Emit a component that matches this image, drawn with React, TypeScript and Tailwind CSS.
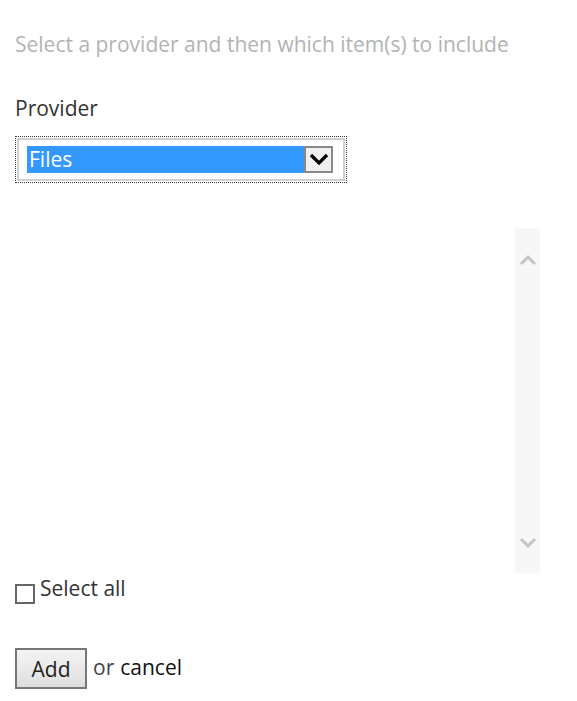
export default function App() {
  return (
    <div className="min-h-screen bg-white text-[#333] px-[15px]" style={{ fontFamily: '"Open Sans", sans-serif' }}>
      <p className="pt-[30px] text-[21px] leading-[28px] text-[#b3b3b3]">
        Select a provider and then which item(s) to include
      </p>

      <label className="block mt-[36px] text-[21px] leading-[28px] text-[#333]">Provider</label>

      {/* provider select */}
      <div className="mt-[14px] w-[332px] h-[47px] border border-dotted border-[#333] p-[1px]">
        <div className="h-full border-2 border-[#cfcfcf] flex items-center pl-[8px] pr-[10px]">
          <div className="flex-1 h-[27px] bg-[#3399ff] text-white text-[21px] leading-[27px] pl-[2px]">Files</div>
          <div className="w-[29px] h-[27px] bg-[#f0f0f0] border-2 border-[#888] flex items-center justify-center">
            <svg width="20" height="13" viewBox="0 0 20 13">
              <path d="M2 2 L10 10 L18 2" fill="none" stroke="#000" strokeWidth="3.2" />
            </svg>
          </div>
        </div>
      </div>

      {/* item list */}
      <div className="mt-[45px] w-[525px] h-[345px] flex justify-end">
        <div className="w-[25px] h-full bg-[#f7f7f7] flex flex-col items-center justify-between pt-[26px] pb-[24px]">
          <svg width="18" height="12" viewBox="0 0 18 12">
            <path d="M2 10 L9 3 L16 10" fill="none" stroke="#c4c4c4" strokeWidth="3" />
          </svg>
          <svg width="18" height="12" viewBox="0 0 18 12">
            <path d="M2 2 L9 9 L16 2" fill="none" stroke="#c4c4c4" strokeWidth="3" />
          </svg>
        </div>
      </div>

      <div className="mt-[1px] flex items-start text-[21px] leading-[28px]">
        <span className="mt-[10px] w-[20px] h-[20px] border-2 border-[#666] bg-white" />
        <span className="ml-[5px]">Select all</span>
      </div>

      <div className="mt-[44px] flex items-center text-[21px] leading-[28px]">
        <button className="w-[72px] h-[41px] border-2 border-[#777] bg-gradient-to-b from-[#f4f4f4] to-[#dedede] text-[#222] text-[21px]">
          Add
        </button>
        <span className="ml-[6px] -mt-[4px] text-[#444]">or</span>
        <span className="ml-[6px] -mt-[4px] text-[#111]">cancel</span>
      </div>
    </div>
  );
}
